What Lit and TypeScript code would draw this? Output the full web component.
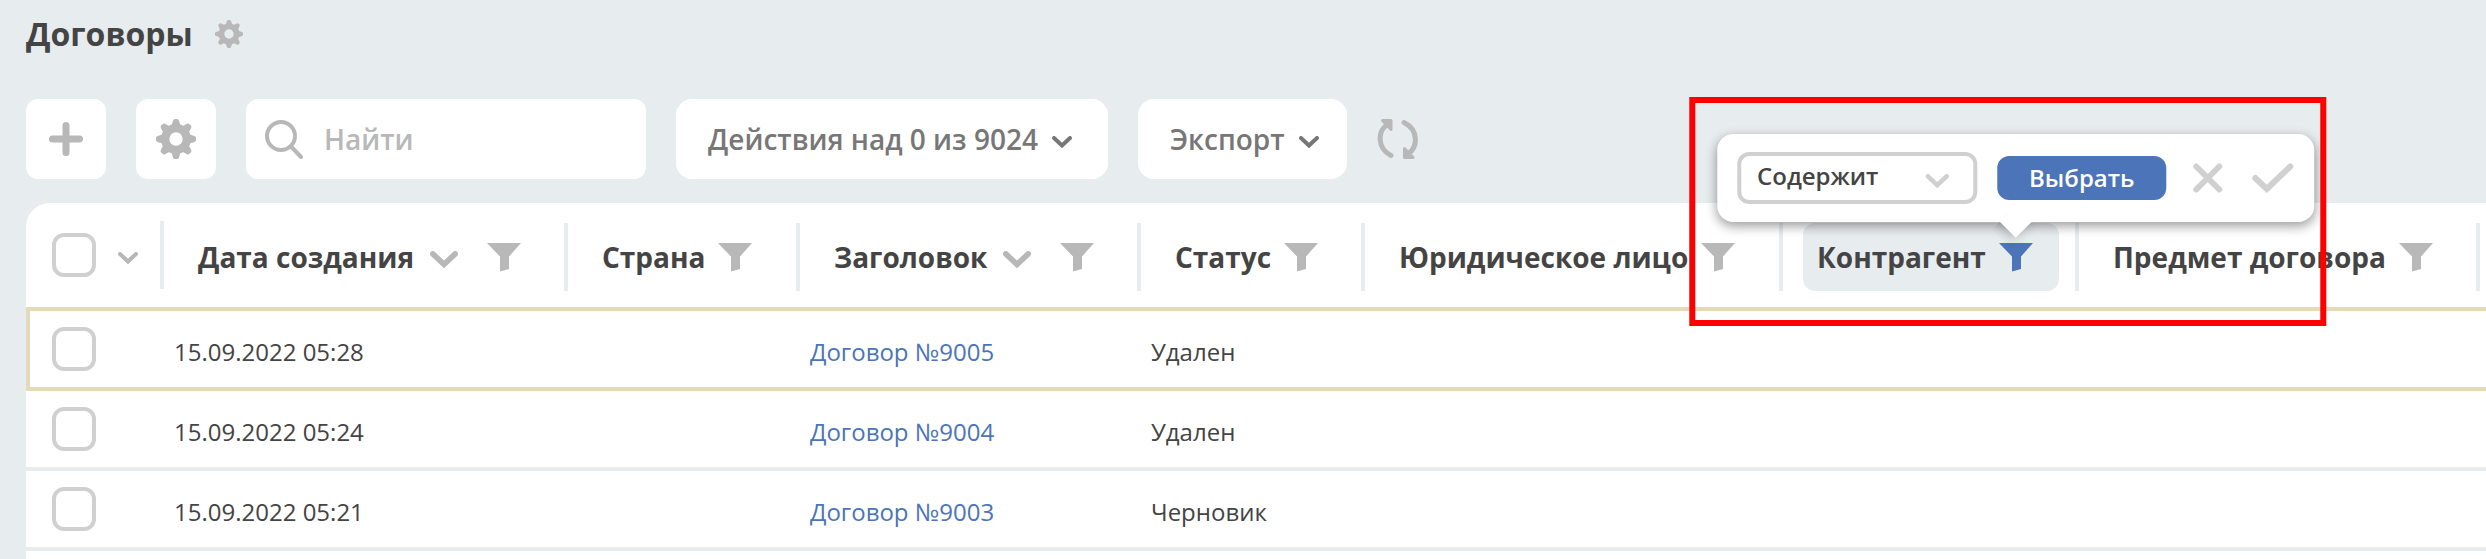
import { LitElement, html, svg, css, nothing } from "lit";
import { customElement } from "lit/decorators.js";

interface Column { title: string; cls: string; sort?: boolean; active?: boolean; }
interface Contract { date: string; title: string; status: string; }

const COLUMNS: Column[] = [
  { title: "Дата создания", cls: "c-date", sort: true },
  { title: "Страна", cls: "c-country" },
  { title: "Заголовок", cls: "c-title", sort: true },
  { title: "Статус", cls: "c-status" },
  { title: "Юридическое лицо", cls: "c-entity" },
  { title: "Контрагент", cls: "c-party", active: true },
  { title: "Предмет договора", cls: "c-subject" },
];

const CONTRACTS: Contract[] = [
  { date: "15.09.2022 05:28", title: "Договор №9005", status: "Удален" },
  { date: "15.09.2022 05:24", title: "Договор №9004", status: "Удален" },
  { date: "15.09.2022 05:21", title: "Договор №9003", status: "Черновик" },
];

const tooth = (a: number) => svg`<path transform="rotate(${a} 20 20)" d="M15 8 L17.1 1.5 Q17.5 0 19 0 H21 Q22.5 0 22.9 1.5 L25 8 Z"/>`;
const gear = html`<svg class="gear" viewBox="0 0 40 40" fill="currentColor" aria-hidden="true">
  ${[0, 45, 90, 135, 180, 225, 270, 315].map(tooth)}
  <path fill-rule="evenodd" d="M20 5a15 15 0 1 0 0 30a15 15 0 1 0 0-30zM20 13.3a6.7 6.7 0 1 1 0 13.4a6.7 6.7 0 1 1 0-13.4z"/></svg>`;
const chevron = (cls: string) => html`<svg class=${cls} viewBox="0 0 20 12" fill="none" stroke="currentColor" stroke-width="4" stroke-linecap="round" stroke-linejoin="miter" aria-hidden="true"><path d="M2 2L10 9.5L18 2"/></svg>`;
const funnel = html`<svg class="funnel" viewBox="0 0 34 29" fill="currentColor" aria-hidden="true"><path d="M0 0H34L22 13.5V26L13 28.5V13.5Z"/></svg>`;

@customElement("app-root")
export class AppRoot extends LitElement {
  static styles = css`
    :host { display: flex; flex-direction: column; box-sizing: border-box; min-height: 100vh; padding-left: 26px; overflow: hidden; background: #e7ecef; color: #444; font-family: "Open Sans", "Noto Sans", sans-serif; font-size: 24px; line-height: 32px; }
    *, *::before { box-sizing: border-box; }
    svg { display: block; flex: none; }
    button { display: flex; align-items: center; justify-content: center; margin: 0; padding: 0; border: 0; background: none; color: #b8b8b8; font: inherit; cursor: pointer; }
    .heading { display: flex; align-items: center; gap: 22px; height: 68px; }
    h1 { margin: 0; font-size: 32px; line-height: 44px; font-weight: 700; }
    .heading .gear { width: 28px; height: 28px; }
    .toolbar { display: flex; align-items: center; gap: 30px; padding: 31px 26px 24px 0; font-size: 28px; font-weight: 600; }
    .tile { width: 80px; height: 80px; border-radius: 12px; background: #fff; }
    .tile .gear { width: 40px; height: 40px; }
    .plus { width: 36px; height: 36px; }
    .search { display: flex; align-items: center; gap: 20px; width: 400px; height: 80px; padding: 0 18px; border-radius: 12px; background: #fff; color: #b8b8b8; }
    .search svg { width: 40px; height: 40px; }
    .search input { flex: 1; min-width: 0; border: 0; padding: 0; outline: 0; background: none; color: #444; font: inherit; }
    .search input::placeholder { color: #b8b8b8; opacity: 1; }
    .menu { justify-content: flex-start; gap: 14px; height: 80px; padding: 0 28px 0 32px; border-radius: 16px; background: #fff; color: #777; }
    .menu.bulk { min-width: 432px; }
    .chev-s { width: 20px; height: 12px; margin-top: 6px; }
    .chev-m { width: 28px; height: 17px; }
    .refresh svg { width: 42px; height: 40px; }
    .panel { flex: 1; border-top-left-radius: 24px; background: #fff; }
    table { width: 100%; table-layout: fixed; border-spacing: 0; }
    .c-check { width: 138px; } .c-date { width: 404px; } .c-country { width: 232px; } .c-title { width: 341px; }
    .c-status { width: 224px; } .c-entity { width: 418px; } .c-party { width: 296px; } .c-subject { width: 401px; }
    th { padding: 20px 0 16px; text-align: left; font-size: 28px; font-weight: 700; }
    th.pick { padding: 18px 0; }
    .cell { display: flex; height: 68px; padding: 0 16px 0 20px; border-right: 4px solid #e7ecef; white-space: nowrap; }
    .pick .cell { align-items: center; gap: 22px; padding: 0 22px 0 26px; }
    .head { display: flex; flex: 1; align-items: center; gap: 13px; padding: 0 12px 0 14px; border-radius: 12px; }
    .head.active { background: #e7ecef; }
    .sort { padding: 4px 16px 0 3px; }
    .anchor { position: relative; }
    .anchor.on > button { color: #4b74b9; }
    .funnel { width: 34px; height: 29px; }
    input[type="checkbox"] { display: block; flex: none; appearance: none; width: 44px; height: 44px; margin: 0; border: 4px solid #d0d0d0; border-radius: 12px; background: #fff; }
    td { height: 80px; padding: 6px 10px 0; border-bottom: 4px solid #e7ecef; white-space: nowrap; }
    td.pick { padding: 0 26px; }
    .current td { height: 84px; border-top: 4px solid #e4d9b8; border-bottom-color: #e4d9b8; }
    .current td.pick { padding-left: 22px; border-left: 4px solid #e4d9b8; }
    a { color: #4b74b9; text-decoration: none; }
    .popover { position: absolute; z-index: 2; bottom: 50px; left: 50%; display: flex; align-items: center; gap: 20px; height: 88px; padding: 0 20px; border-radius: 16px; background: #fff; box-shadow: 0 4px 12px rgba(0, 0, 0, 0.4); transform: translateX(-50%); font-size: 24px; }
    .popover::before { content: ""; position: absolute; left: 50%; bottom: -11px; width: 23px; height: 23px; margin-left: -11px; background: #fff; box-shadow: 0 4px 12px rgba(0, 0, 0, 0.2); transform: rotate(45deg); clip-path: polygon(100% 0, 150% 0, 150% 150%, 0 150%, 0 100%, 100% 0, 0 0, 0 100%); }
    .choice { position: relative; display: block; color: #d0d0d0; }
    .choice select { display: block; appearance: none; width: 240px; height: 52px; padding: 0 40px 4px 16px; border: 4px solid #d0d0d0; border-radius: 12px; background: #fff; color: #444; font: inherit; font-weight: 600; }
    .choice svg { position: absolute; right: 28px; top: 22px; width: 24px; height: 14px; }
    .apply { height: 44px; padding: 0 32px; border-radius: 12px; background: #4b74b9; color: #fff; font-weight: 600; }
    .popover .icon { color: #d0d0d0; }
    .cross { width: 44px; height: 30px; }
    .tick { width: 44px; height: 30px; }
    .callout { position: absolute; inset: -37px -12px -104px -28px; border: 6px solid #f00; pointer-events: none; }
  `;

  private filterPopover() {
    return html`<div class="popover" role="dialog" aria-label="Фильтр">
      <label class="choice"><select aria-label="Условие"><option>Содержит</option></select>${chevron("")}</label>
      <button class="apply" type="button">Выбрать</button>
      <button class="icon" type="button" aria-label="Сбросить"><svg class="cross" viewBox="0 0 44 30" fill="none" stroke="currentColor" stroke-width="6" stroke-linecap="round"><path d="M10 3.5L33 26.5M33 3.5L10 26.5"/></svg></button>
      <button class="icon" type="button" aria-label="Применить"><svg class="tick" viewBox="0 0 44 30" fill="none" stroke="currentColor" stroke-width="6" stroke-linecap="round"><path d="M5 15L16.5 26L40 3.5"/></svg></button>
      <div class="callout"></div>
    </div>`;
  }

  private header(c: Column) {
    return html`<th class=${c.cls} scope="col"><div class="cell"><div class="head ${c.active ? "active" : ""}">
      <span>${c.title}</span>
      ${c.sort ? html`<button class="sort" type="button" aria-label="Сортировать">${chevron("chev-m")}</button>` : nothing}
      <div class="anchor ${c.active ? "on" : ""}"><button type="button" aria-label="Фильтр">${funnel}</button>${c.active ? this.filterPopover() : nothing}</div>
    </div></div></th>`;
  }

  private row(r: Contract, i: number) {
    return html`<tr class=${i === 0 ? "current" : ""}>
      <td class="pick"><input type="checkbox" aria-label=${r.title}></td>
      <td>${r.date}</td><td></td><td><a href="#">${r.title}</a></td><td>${r.status}</td><td></td><td></td><td></td><td></td>
    </tr>`;
  }

  render() {
    return html`
      <header class="heading"><h1>Договоры</h1><button type="button" aria-label="Настройки раздела">${gear}</button></header>
      <div class="toolbar">
        <button class="tile" type="button" aria-label="Добавить"><svg class="plus" viewBox="0 0 36 36" fill="none" stroke="currentColor" stroke-width="7" stroke-linecap="round"><path d="M18 4.5V31.5M4.5 18H31.5"/></svg></button>
        <button class="tile" type="button" aria-label="Настройки">${gear}</button>
        <label class="search"><svg viewBox="0 0 40 40" fill="none" stroke="currentColor" stroke-width="4" stroke-linecap="round" aria-hidden="true"><circle cx="17" cy="17" r="14"/><path d="M27.5 28L37 38"/></svg><input type="search" placeholder="Найти" aria-label="Найти"></label>
        <button class="menu bulk" type="button">Действия над 0 из 9024 ${chevron("chev-s")}</button>
        <button class="menu" type="button">Экспорт ${chevron("chev-s")}</button>
        <button class="refresh" type="button" aria-label="Обновить"><svg viewBox="0 0 42 40" fill="none" stroke="currentColor" stroke-width="5" stroke-linecap="round" stroke-linejoin="round"><path d="M14 36.5C0 29 0 12 11 5M27 3.5C42 11 41 28 31 35"/><path fill="currentColor" stroke-width="3" d="M5.5 1.5H14V10.5ZM27.5 29.5V38.5H36Z"/></svg></button>
      </div>
      <main class="panel"><table>
        <thead><tr>
          <th class="pick c-check" scope="col"><div class="cell"><input type="checkbox" aria-label="Выбрать все"><button type="button" aria-label="Варианты выбора">${chevron("chev-s")}</button></div></th>
          ${COLUMNS.map((c) => this.header(c))}<th></th>
        </tr></thead>
        <tbody>${CONTRACTS.map((r, i) => this.row(r, i))}</tbody>
      </table></main>`;
  }
}
